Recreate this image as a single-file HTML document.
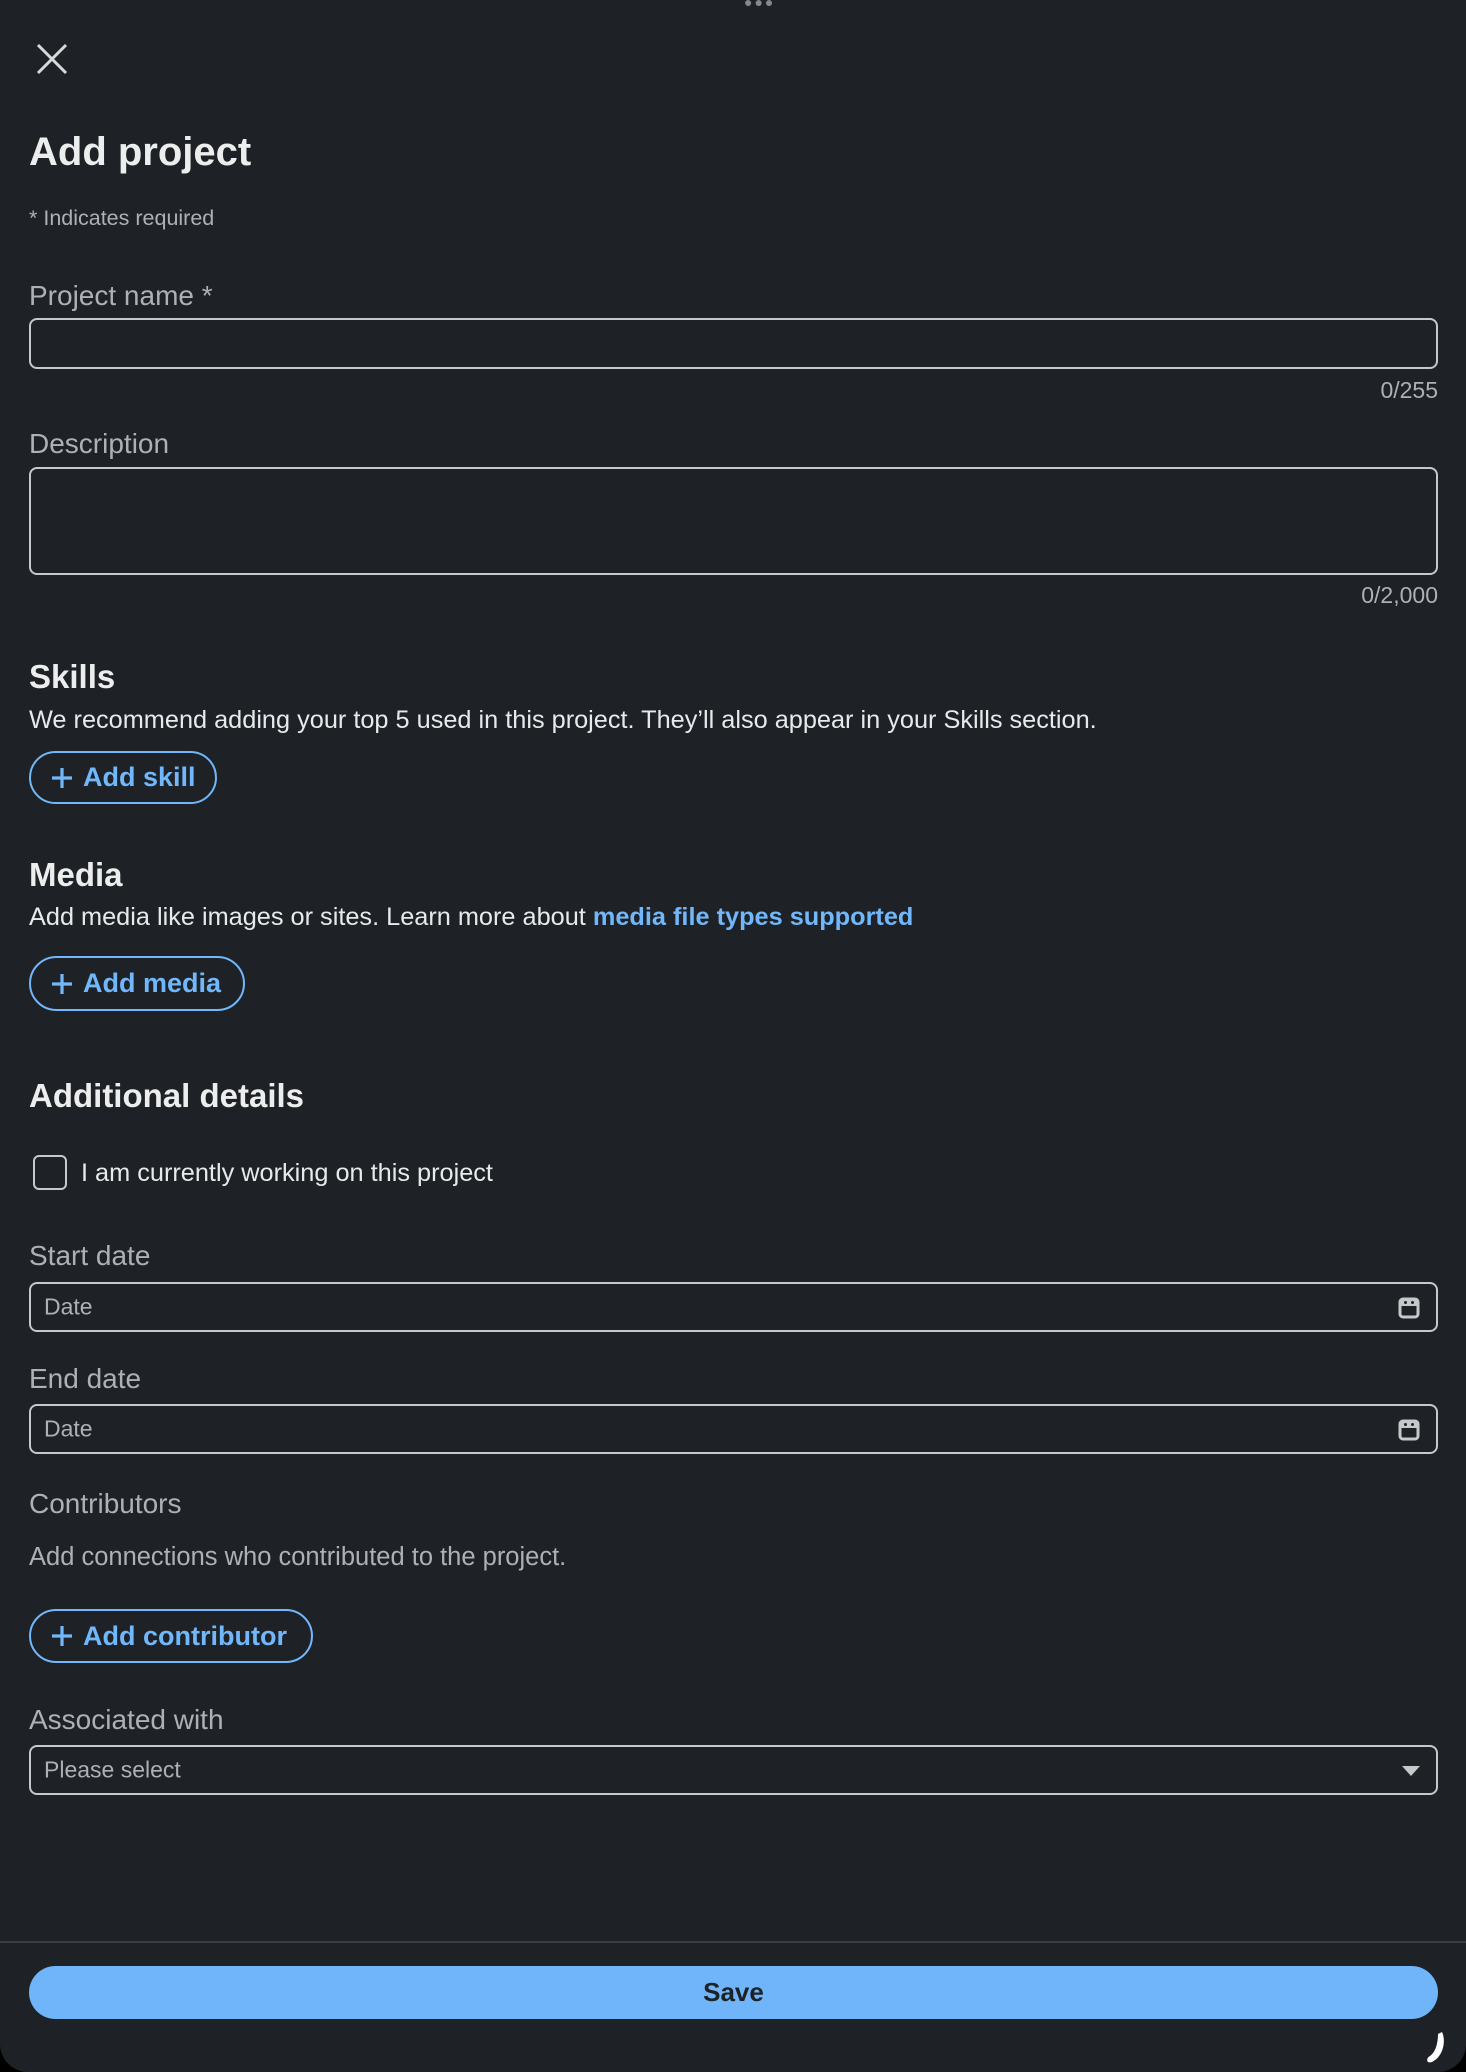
<!DOCTYPE html>
<html><head><meta charset="utf-8"><style>
*{margin:0;padding:0;box-sizing:border-box}
body{width:1466px;height:2072px;background:#000;overflow:hidden;font-family:"Liberation Sans",sans-serif}
.page{position:absolute;left:0;top:0;width:1466px;height:2072px;background:#1e2226;border-radius:0 0 28px 28px}
.a{position:absolute;white-space:nowrap}
.lbl{color:#aeb1b4;font-size:28px;line-height:30px}
.box{position:absolute;left:29px;width:1409px;border:2px solid #c6c8ca;border-radius:8px}
.cnt{color:#aeb1b4;font-size:23px;line-height:26px;right:28px}
.h{color:#eceded;font-size:33px;font-weight:bold;line-height:38px}
.t{color:#e8e9ea;font-size:25.3px;line-height:28px}
.btn{position:absolute;left:29px;border:2px solid #71b7fb;border-radius:30px;color:#71b7fb;font-weight:bold;font-size:27px;display:flex;align-items:center;padding-left:20px}
.btn svg{margin-right:10px}
.ph{color:#aeb1b4;font-size:23px;position:absolute;left:13px;top:50%;transform:translateY(-50%)}
</style></head><body><div class="page">
<div class="a" style="left:744px;top:-6px;color:#888;font-size:14px;letter-spacing:2px">●●●</div>
<svg class="a" style="left:36px;top:43px" width="32" height="32" viewBox="0 0 32 32"><path d="M2 2L30 30M30 2L2 30" stroke="#d8d9da" stroke-width="3"/></svg>
<div class="a" style="left:29px;top:129px;color:#eceded;font-size:40px;font-weight:bold;line-height:46px">Add project</div>
<div class="a" style="left:29px;top:206px;color:#aeb1b4;font-size:21.5px;line-height:24px">* Indicates required</div>
<div class="a lbl" style="left:29px;top:281px">Project name *</div>
<div class="box" style="top:318px;height:51px"></div>
<div class="a cnt" style="top:377px">0/255</div>
<div class="a lbl" style="left:29px;top:429px">Description</div>
<div class="box" style="top:467px;height:108px"></div>
<div class="a cnt" style="top:582px">0/2,000</div>
<div class="a h" style="left:29px;top:658px">Skills</div>
<div class="a t" style="left:29px;top:706px">We recommend adding your top 5 used in this project. They’ll also appear in your Skills section.</div>
<div class="btn" style="top:751px;width:188px;height:53px"><svg width="22" height="22" viewBox="0 0 22 22"><path d="M11 1V21M1 11H21" stroke="#71b7fb" stroke-width="3.2"/></svg>Add skill</div>
<div class="a h" style="left:29px;top:856px">Media</div>
<div class="a t" style="left:29px;top:903px">Add media like images or sites. Learn more about <b style="color:#71b7fb">media file types supported</b></div>
<div class="btn" style="top:956px;width:216px;height:55px"><svg width="22" height="22" viewBox="0 0 22 22"><path d="M11 1V21M1 11H21" stroke="#71b7fb" stroke-width="3.2"/></svg>Add media</div>
<div class="a h" style="left:29px;top:1077px">Additional details</div>
<div class="a" style="left:33px;top:1155px;width:34px;height:35px;border:2px solid #c6c8ca;border-radius:6px"></div>
<div class="a t" style="left:81px;top:1159px">I am currently working on this project</div>
<div class="a lbl" style="left:29px;top:1241px">Start date</div>
<div class="box" style="top:1282px;height:50px"><span class="ph">Date</span>
<svg style="position:absolute;right:16px;top:13px" width="22" height="22" viewBox="0 0 22 22"><rect x="2" y="2" width="18" height="18" rx="3" fill="none" stroke="#c6c8ca" stroke-width="3"/><rect x="2" y="2" width="18" height="7" fill="#c6c8ca"/><circle cx="7.5" cy="5.5" r="1.5" fill="#1e2226"/><circle cx="14.5" cy="5.5" r="1.5" fill="#1e2226"/></svg></div>
<div class="a lbl" style="left:29px;top:1364px">End date</div>
<div class="box" style="top:1404px;height:50px"><span class="ph">Date</span>
<svg style="position:absolute;right:16px;top:13px" width="22" height="22" viewBox="0 0 22 22"><rect x="2" y="2" width="18" height="18" rx="3" fill="none" stroke="#c6c8ca" stroke-width="3"/><rect x="2" y="2" width="18" height="7" fill="#c6c8ca"/><circle cx="7.5" cy="5.5" r="1.5" fill="#1e2226"/><circle cx="14.5" cy="5.5" r="1.5" fill="#1e2226"/></svg></div>
<div class="a lbl" style="left:29px;top:1489px">Contributors</div>
<div class="a" style="left:29px;top:1544px;color:#aeb1b4;font-size:25.5px;line-height:26px">Add connections who contributed to the project.</div>
<div class="btn" style="top:1609px;width:284px;height:54px"><svg width="22" height="22" viewBox="0 0 22 22"><path d="M11 1V21M1 11H21" stroke="#71b7fb" stroke-width="3.2"/></svg>Add contributor</div>
<div class="a lbl" style="left:29px;top:1705px">Associated with</div>
<div class="box" style="top:1745px;height:50px"><span class="ph">Please select</span>
<svg style="position:absolute;right:16px;top:19px" width="18" height="10" viewBox="0 0 18 10"><path d="M0 0H18L9 10Z" fill="#c6c8ca"/></svg></div>
<div class="a" style="left:0;top:1941px;width:1466px;height:2px;background:#3a3d41"></div>
<div class="a" style="left:29px;top:1966px;width:1409px;height:53px;background:#70b5f9;border-radius:27px;color:#1d2226;font-size:26px;font-weight:bold;text-align:center;line-height:53px">Save</div>
<svg class="a" style="left:1424px;top:2030px" width="24" height="36" viewBox="0 0 24 36"><path d="M18 2C22 10 20 26 8 32C2 34 2 28 6 26C12 22 14 12 14 4Z" fill="#fff"/></svg>
</div></body></html>
